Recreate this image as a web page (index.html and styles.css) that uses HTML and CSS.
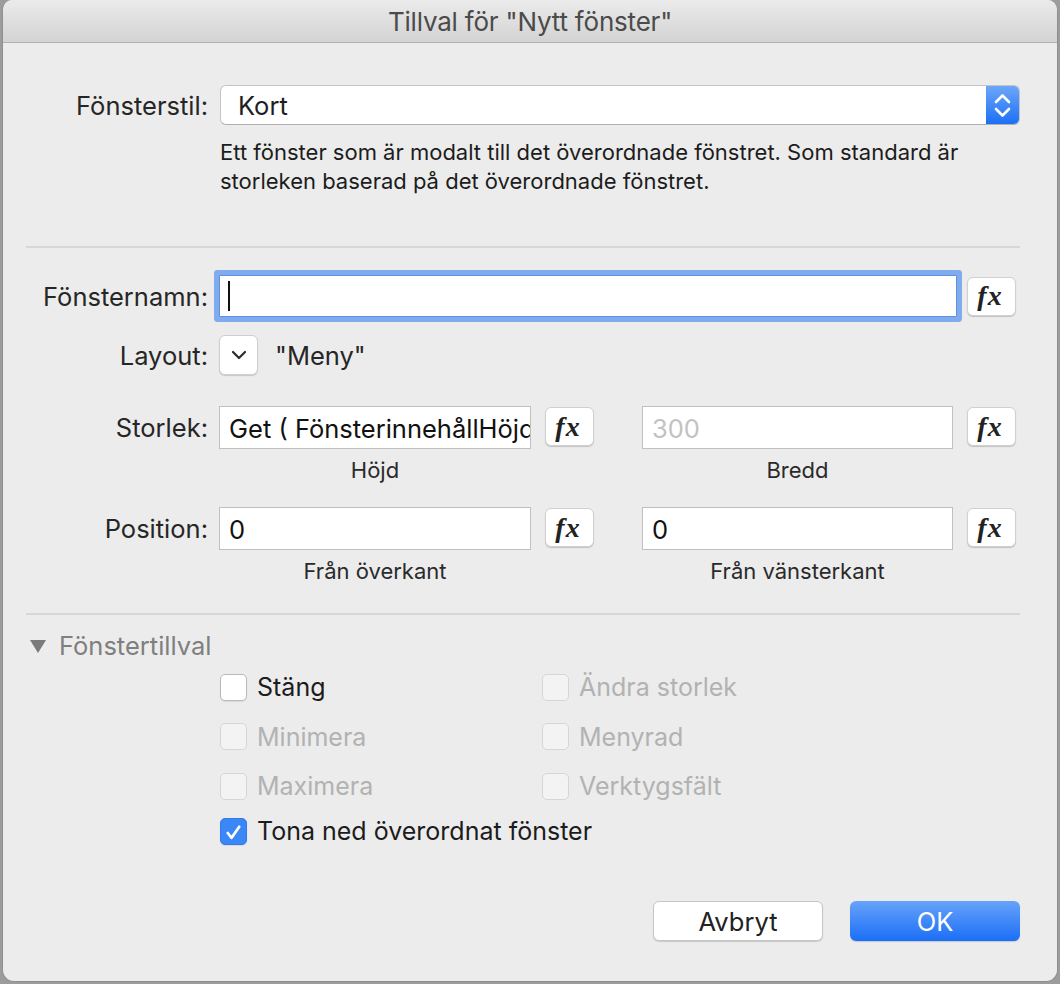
FILE: index.html
```html
<!DOCTYPE html>
<html lang="sv">
<head>
<meta charset="UTF-8">
<meta name="viewport" content="width=device-width, initial-scale=1.0">
<title>Tillval för "Nytt fönster"</title>
<link rel="stylesheet" href="styles.css">
</head>
<body>
<div class="window">
  <div class="titlebar">Tillval för "Nytt fönster"</div>

  <div class="content">
    <div class="row style-row">
      <span class="label">Fönsterstil:</span>
      <div class="popup">
        <span class="popup-value">Kort</span>
        <span class="stepper">
          <svg width="33" height="40" viewBox="0 0 33 40">
            <path d="M10 17 L16.5 10.5 L23 17" fill="none" stroke="#fff" stroke-width="2.6" stroke-linecap="round" stroke-linejoin="round"/>
            <path d="M10 24 L16.5 30.5 L23 24" fill="none" stroke="#fff" stroke-width="2.6" stroke-linecap="round" stroke-linejoin="round"/>
          </svg>
        </span>
      </div>
    </div>
    <p class="desc">Ett fönster som är modalt till det överordnade fönstret. Som standard är<br>storleken baserad på det överordnade fönstret.</p>

    <div class="sep sep-first"></div>

    <div class="row name-row">
      <span class="label">Fönsternamn:</span>
      <div class="field field-focus"><span class="caret"></span></div>
      <button class="fx">fx</button>
    </div>

    <div class="row layout-row">
      <span class="label">Layout:</span>
      <button class="mini-popup">
        <svg width="18" height="12" viewBox="0 0 18 12">
          <path d="M3 3 L9 9 L15 3" fill="none" stroke="#2b2b2b" stroke-width="2.2" stroke-linecap="round" stroke-linejoin="round"/>
        </svg>
      </button>
      <span class="layout-name">"Meny"</span>
    </div>

    <div class="row pair-row size-row">
      <span class="label">Storlek:</span>
      <div class="field-group">
        <div class="field">Get ( FönsterinnehållHöjd )</div>
        <span class="caption">Höjd</span>
      </div>
      <button class="fx">fx</button>
      <div class="field-group second">
        <div class="field placeholder">300</div>
        <span class="caption">Bredd</span>
      </div>
      <button class="fx">fx</button>
    </div>

    <div class="row pair-row position-row">
      <span class="label">Position:</span>
      <div class="field-group">
        <div class="field">0</div>
        <span class="caption">Från överkant</span>
      </div>
      <button class="fx">fx</button>
      <div class="field-group second">
        <div class="field">0</div>
        <span class="caption">Från vänsterkant</span>
      </div>
      <button class="fx">fx</button>
    </div>

    <div class="sep sep-second"></div>

    <div class="disclosure"><span class="triangle"></span>Fönstertillval</div>

    <div class="options">
      <label class="check"><span class="box"></span>Stäng</label>
      <label class="check disabled"><span class="box"></span>Ändra storlek</label>
      <label class="check disabled"><span class="box"></span>Minimera</label>
      <label class="check disabled"><span class="box"></span>Menyrad</label>
      <label class="check disabled"><span class="box"></span>Maximera</label>
      <label class="check disabled"><span class="box"></span>Verktygsfält</label>
    </div>
    <label class="check dim-parent"><span class="box checked">
      <svg width="26" height="27" viewBox="0 0 26 27">
        <path d="M7 14 L11 19 L19 7.5" fill="none" stroke="#fff" stroke-width="2.8" stroke-linecap="round" stroke-linejoin="round"/>
      </svg>
    </span>Tona ned överordnat fönster</label>

    <div class="buttons">
      <button class="button">Avbryt</button>
      <button class="button default">OK</button>
    </div>
  </div>
</div>
</body>
</html>
```

FILE: styles.css
```css
body {
  margin: 0;
  padding: 0;
  background-color: #9c9c9c;
  font-family: Inter, "Noto Sans", "Liberation Sans", sans-serif;
  color: #262626;
}

.window {
  width: 1054px;
  height: 981px;
  margin-left: 2px;
  background-color: #ececec;
  border: 1px solid #8f8f8f;
  border-top: none;
  border-radius: 10px 10px 12px 12px;
  overflow: hidden;
}

.titlebar {
  height: 42px;
  line-height: 44px;
  text-align: center;
  font-size: 26px;
  color: #4b4b4b;
  background: linear-gradient(#ebebeb, #d3d3d3);
  border-bottom: 1px solid #b1b1b1;
  letter-spacing: -0.2px;
}

.content {
  padding: 42px 37px 0 0;
}

.row {
  display: flex;
  align-items: center;
}

.label {
  width: 205px;
  flex-shrink: 0;
  text-align: right;
  font-size: 25.5px;
  margin-right: 12px;
}

/* Fönsterstil */
.popup {
  flex: 1;
  height: 38px;
  display: flex;
  align-items: center;
  background-color: #fff;
  border: 1px solid #c4c4c4;
  border-bottom-color: #b0b0b0;
  border-radius: 6px;
  overflow: hidden;
}

.popup-value {
  flex: 1;
  font-size: 25.5px;
  padding-left: 17px;
  color: #1e1e1e;
}

.stepper {
  width: 33px;
  height: 40px;
  background: linear-gradient(#6ea8f9, #1a6ef6);
}

.desc {
  margin: 13px 0 0 217px;
  font-size: 22px;
  line-height: 29px;
  color: #1c1c1c;
}

.sep {
  height: 2px;
  background-color: #d7d7d7;
  margin-left: 23px;
}

.sep-first {
  margin-top: 50px;
}

/* Fields */
.field {
  line-height: 43px;
  background-color: #fff;
  border: 1px solid #c0c0c0;
  font-size: 25.5px;
  padding-left: 9px;
  white-space: nowrap;
  overflow: hidden;
  box-sizing: border-box;
  height: 43px;
  color: #111;
}

.placeholder {
  color: #c2c2c2;
}

.name-row {
  margin-top: 27px;
}

.name-row .label {
  margin-right: 11px;
}

.field-focus {
  width: 738px;
  height: 42px;
  border: 1px solid #5f92dd;
  box-shadow: 0 0 0 5px #80abee;
  border-radius: 1px;
  position: relative;
}

.caret {
  position: absolute;
  left: 8px;
  top: 5px;
  width: 2px;
  height: 30px;
  background-color: #111;
}

.fx {
  width: 49px;
  height: 39px;
  margin-left: 10px;
  padding: 0 3px 0 0;
  background-color: #fff;
  border: 1px solid #d0d0d0;
  border-radius: 6px;
  box-shadow: 0 1px 1px rgba(0, 0, 0, 0.18);
  font-family: "Liberation Serif", "DejaVu Serif", serif;
  font-style: italic;
  font-weight: bold;
  font-size: 28px;
  letter-spacing: 1px;
  color: #222;
  cursor: pointer;
}

.layout-row {
  margin-top: 18px;
}

.layout-row .label {
  margin-right: 11px;
}

.mini-popup {
  width: 39px;
  height: 40px;
  padding: 0;
  background-color: #fff;
  border: 1px solid #cfcfcf;
  border-radius: 6px;
  box-shadow: 0 1px 1px rgba(0, 0, 0, 0.16);
  display: flex;
  align-items: center;
  justify-content: center;
}

.layout-name {
  font-size: 25.5px;
  margin-left: 17px;
}

.pair-row {
  align-items: flex-start;
}

.pair-row .label {
  margin-right: 11px;
  line-height: 43px;
}

.pair-row .fx {
  margin-left: 14px;
  margin-top: 1px;
}

.size-row {
  margin-top: 31px;
}

.position-row {
  margin-top: 24px;
}

.field-group {
  width: 312px;
  display: flex;
  flex-direction: column;
  align-items: center;
}

.field-group .field {
  width: 100%;
}

.field-group.second {
  margin-left: 48px;
  width: 311px;
}

.caption {
  font-size: 22px;
  line-height: 26px;
  margin-top: 8px;
  color: #2a2a2a;
}

.sep-second {
  margin-top: 29px;
}

/* Fönstertillval */
.disclosure {
  margin: 16px 0 0 27px;
  font-size: 25.5px;
  line-height: 30px;
  color: #7f7f7f;
  display: flex;
  align-items: center;
}

.triangle {
  width: 0;
  height: 0;
  border-left: 8px solid transparent;
  border-right: 8px solid transparent;
  border-top: 13px solid #7a7a7a;
  margin-right: 13px;
}

.options {
  display: grid;
  grid-template-columns: 322px 300px;
  row-gap: 19.5px;
  margin: 11px 0 0 217px;
}

.check {
  display: flex;
  align-items: center;
  height: 30px;
  font-size: 25px;
  color: #1c1c1c;
}

.check.disabled {
  color: #b2b2b2;
}

.box {
  width: 25px;
  height: 25px;
  margin-right: 10px;
  background-color: #fff;
  border: 1px solid #b9b9b9;
  border-radius: 5px;
  box-shadow: 0 1px 1px rgba(0, 0, 0, 0.08);
  display: flex;
}

.disabled .box {
  background-color: #f3f3f3;
  border-color: #d6d6d6;
  box-shadow: none;
}

.box.checked {
  background-color: #3b87f7;
  border-color: #3379e8;
}

.dim-parent {
  margin: 15px 0 0 217px;
}

.buttons {
  display: flex;
  justify-content: flex-end;
  gap: 27px;
  margin-top: 55px;
}

.button {
  width: 170px;
  height: 40px;
  font-family: Inter, "Noto Sans", "Liberation Sans", sans-serif;
  font-size: 25.5px;
  color: #222;
  background-color: #fff;
  border: 1px solid #c6c6c6;
  border-radius: 6px;
  box-shadow: 0 1px 1px rgba(0, 0, 0, 0.15);
  cursor: pointer;
}

.button.default {
  color: #fff;
  border: none;
  background: linear-gradient(#67a3fa, #1b6ef6);
}
```
